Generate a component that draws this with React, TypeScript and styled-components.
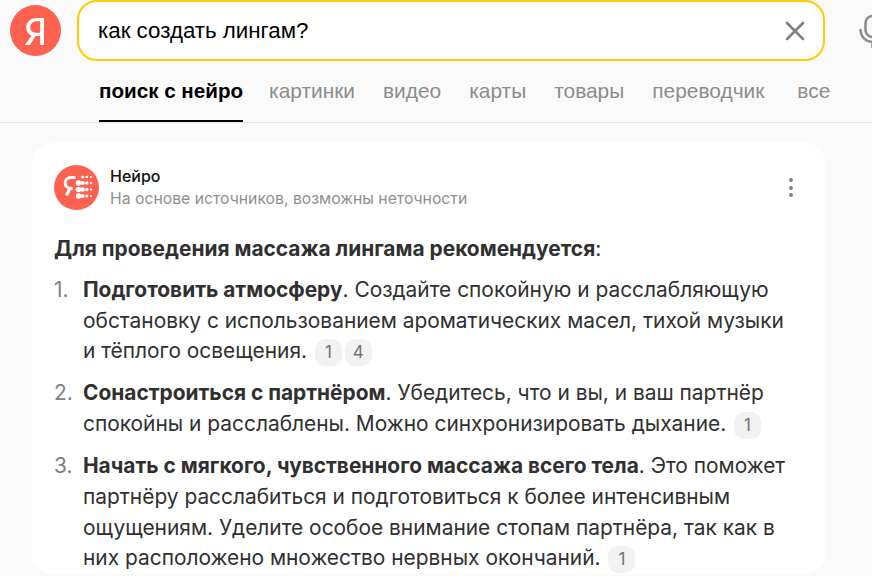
import React from "react";
import styled, { createGlobalStyle } from "styled-components";

const Global = createGlobalStyle`
  html, body {
    margin: 0;
    padding: 0;
    width: 872px;
    height: 576px;
    overflow: hidden;
    background: #fafafa;
  }
`;

const Page = styled.div`
  width: 872px;
  height: 576px;
  overflow: hidden;
  font-family: "Liberation Sans", Arial, sans-serif;
`;

const Header = styled.header`
  height: 122px;
  border-bottom: 1px solid #e6e6e6;
  box-sizing: content-box;
`;

const TopRow = styled.div`
  display: flex;
  align-items: flex-start;
  height: 61px;
  padding-left: 10px;
`;

const LogoLink = styled.a`
  flex: none;
  width: 51px;
  height: 51px;
  margin-top: 5px;
  margin-right: 16px;
`;

const SearchBox = styled.div`
  flex: none;
  display: flex;
  align-items: center;
  justify-content: space-between;
  box-sizing: border-box;
  width: 748px;
  height: 61px;
  padding: 0 17px 0 19px;
  background: #fff;
  border: 2px solid #fc0;
  border-radius: 20px;
  font-size: 22.3px;
  color: #000;
`;

const MicSlot = styled.div`
  flex: none;
  margin: 13px 0 0 34px;
`;

const Tabs = styled.nav`
  display: flex;
  gap: 28px;
  padding-left: 99px;
  height: 61px;
`;

const Tab = styled.a<{ $active?: boolean }>`
  display: block;
  box-sizing: border-box;
  height: 61px;
  padding-top: 18px;
  line-height: 24px;
  white-space: nowrap;
  color: ${({ $active }) => ($active ? "#000" : "#8c8c8c")};
  font-weight: ${({ $active }) => ($active ? 700 : 400)};
  font-size: ${({ $active }) => ($active ? "20.6px" : "20.9px")};
  margin-right: ${({ $active }) => ($active ? "-2px" : "0")};
  border-bottom: 2px solid ${({ $active }) => ($active ? "#000" : "transparent")};

  &:last-child {
    margin-left: 5px;
  }
`;

const Card = styled.section`
  box-sizing: border-box;
  width: 793px;
  margin: 20px 0 0 32px;
  padding: 22px 22px 0;
  background: #fff;
  border-radius: 20px;
  font-family: Inter, sans-serif;
  color: #303030;
`;

const CardHead = styled.div`
  display: flex;
  align-items: center;
  gap: 11px;
  height: 45px;
`;

const HeadText = styled.div`
  flex: 1;
`;

const HeadTitle = styled.div`
  margin: -1px 0 1px;
  font-size: 16px;
  line-height: 22px;
  font-weight: 550;
  color: #111;
`;

const HeadSub = styled.div`
  font-size: 15.75px;
  line-height: 22px;
  color: #8f8f8f;
`;

const MoreButton = styled.div`
  display: flex;
  flex-direction: column;
  gap: 3.5px;
  margin-right: 10px;
`;

const Dot = styled.span`
  width: 4px;
  height: 4px;
  border-radius: 50%;
  background: #808080;
`;

const Lead = styled.p`
  margin: 23px 0 0;
  font-size: 20.9px;
  line-height: 31px;
`;

const Steps = styled.ol`
  list-style: none;
  margin: 11px 0 0;
  padding: 0;
`;

const Step = styled.li<{ $gap: number }>`
  display: flex;
  margin-bottom: ${({ $gap }) => $gap}px;
  font-size: 20.9px;
  line-height: 30.67px;
`;

const StepNo = styled.span`
  flex: none;
  width: 29px;
  color: #808080;
`;

const StepText = styled.div`
  flex: 1;
  padding-right: 10px;
`;

const Ref = styled.span`
  display: inline-block;
  min-width: 27px;
  box-sizing: border-box;
  height: 27px;
  margin: 0 1px 0 2px;
  padding: 0 8px;
  border-radius: 10px;
  background: #f2f2f2;
  color: #737373;
  font-size: 17px;
  line-height: 27px;
  text-align: center;
`;

const YaLogo = () => (
  <svg width="51" height="51" viewBox="0 0 51 51">
    <circle cx="25.5" cy="25.5" r="25.5" fill="#fc624f" />
    <path
      d="M34 13h-6.600c-6.600 0-11.200 3.800-11.200 9.400 0 4 1.900 6.600 5.300 8.300L15 40h4.700l6-9h4.500v9H34zM30.200 27.800h-3.500c-4 0-6.400-2-6.400-5.500 0-3.500 2.600-6 6.700-6h3.200z"
      fill="#fff"
    />
  </svg>
);

const NeuroLogo = () => (
  <svg width="45" height="45" viewBox="0 0 45 45">
    <circle cx="22.500" cy="22.500" r="22.500" fill="#fc624f" />
    <path
      d="M21.500 12.500h-4.500c-3.500 0-5.800 2.300-5.800 5.400 0 3.300 2.400 5.600 6 5.600h1.500M15.800 23.500L12.500 30.500"
      fill="none"
      stroke="#fff"
      strokeWidth="3"
    />
    {[
      [28.700, 12, 1.500], [32.800, 12, 1.300], [37, 12, 1.100],
      [24.500, 18, 2.700], [28.700, 18, 2.100], [32.800, 18, 1.700], [37, 18, 1.200],
      [24.500, 24.500, 2.800], [28.700, 24.500, 2.200], [32.800, 24.500, 1.700], [37, 24.500, 1.200],
      [24.500, 31, 2.700], [28.700, 31, 2], [32.800, 31, 1.500], [37, 31, 1],
    ].map(([cx, cy, r]) => (
      <circle key={`${cx}-${cy}`} cx={cx} cy={cy} r={r} fill="#fff" />
    ))}
  </svg>
);

const CloseIcon = () => (
  <svg width="22" height="22" viewBox="0 0 22 22">
    <path d="M3 3l16 16M19 3L3 19" stroke="#808080" strokeWidth="2.600" strokeLinecap="round" fill="none" />
  </svg>
);

const MicIcon = () => (
  <svg width="30" height="36" viewBox="0 0 30 36" fill="none" stroke="#8c8c8c" strokeWidth="2.500">
    <rect x="6.500" y="3" width="14" height="21" rx="7" />
    <path d="M1.500 16c0 8 5.500 13 12 13s12-5 12-13M13.500 29v6" />
  </svg>
);

const App: React.FC = () => (
  <Page>
    <Global />
    <Header>
      <TopRow>
        <LogoLink>
          <YaLogo />
        </LogoLink>
        <SearchBox>
          как создать лингам?
          <CloseIcon />
        </SearchBox>
        <MicSlot>
          <MicIcon />
        </MicSlot>
      </TopRow>
      <Tabs>
        <Tab $active>поиск с нейро</Tab>
        <Tab>картинки</Tab>
        <Tab>видео</Tab>
        <Tab>карты</Tab>
        <Tab>товары</Tab>
        <Tab>переводчик</Tab>
        <Tab>все</Tab>
      </Tabs>
    </Header>
    <Card>
      <CardHead>
        <NeuroLogo />
        <HeadText>
          <HeadTitle>Нейро</HeadTitle>
          <HeadSub>На основе источников, возможны неточности</HeadSub>
        </HeadText>
        <MoreButton>
          <Dot />
          <Dot />
          <Dot />
        </MoreButton>
      </CardHead>
      <Lead>
        <b>Для проведения массажа лингама рекомендуется</b>:
      </Lead>
      <Steps>
        <Step $gap={11}>
          <StepNo>1.</StepNo>
          <StepText>
            <b>Подготовить атмосферу</b>. Создайте спокойную и расслабляющую обстановку с использованием ароматических
            масел, тихой музыки и тёплого освещения. <Ref>1</Ref>
            <Ref>4</Ref>
          </StepText>
        </Step>
        <Step $gap={12}>
          <StepNo>2.</StepNo>
          <StepText>
            <b>Сонастроиться с партнёром</b>. Убедитесь, что и вы, и ваш партнёр спокойны и расслаблены. Можно
            синхронизировать дыхание. <Ref>1</Ref>
          </StepText>
        </Step>
        <Step $gap={10}>
          <StepNo>3.</StepNo>
          <StepText>
            <b>Начать с мягкого, чувственного массажа всего тела</b>. Это поможет партнёру расслабиться и подготовиться
            к более интенсивным ощущениям. Уделите особое внимание стопам партнёра, так как в них расположено множество
            нервных окончаний. <Ref>1</Ref>
          </StepText>
        </Step>
      </Steps>
    </Card>
  </Page>
);

export default App;
